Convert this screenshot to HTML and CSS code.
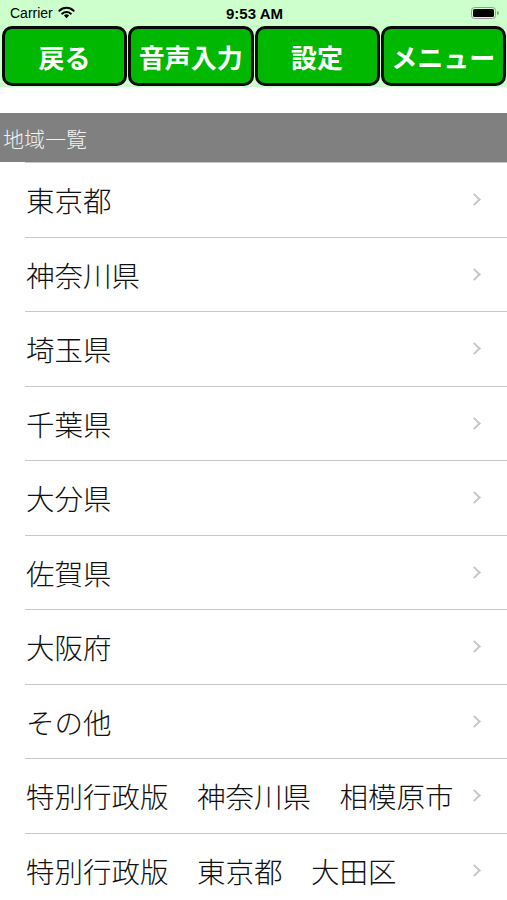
FILE: index.html
```html
<!DOCTYPE html>
<html lang="ja">
<head>
<meta charset="utf-8">
<link rel="stylesheet" href="styles.css">
</head>
<body>
<div class="top">
  <div class="status">
    <div class="st-left">
      <span class="carrier">Carrier</span>
      <svg class="wifi" width="17" height="13" viewBox="0 0 16 12">
        <path d="M8 11.5 L5.6 8.9 A3.4 3.4 0 0 1 10.4 8.9 Z" fill="#000"/>
        <path d="M3.9 7.1 A5.9 5.9 0 0 1 12.1 7.1" fill="none" stroke="#000" stroke-width="1.9" stroke-linecap="round"/>
        <path d="M1.3 4.4 A9.5 9.5 0 0 1 14.7 4.4" fill="none" stroke="#000" stroke-width="1.9" stroke-linecap="round"/>
      </svg>
    </div>
    <div class="time">9:53 AM</div>
    <div class="st-right">
      <svg class="battery" width="28" height="12" viewBox="0 0 28 12">
        <rect x="0.5" y="0.5" width="24" height="11" rx="3" fill="none" stroke="#9a9a9a" stroke-width="1"/>
        <rect x="2" y="2" width="21" height="8" rx="1.5" fill="#000"/>
        <path d="M26 4 a1.5 1.5 0 0 1 0 4 z" fill="#9a9a9a"/>
      </svg>
    </div>
  </div>
  <div class="toolbar">
    <div class="btn">戻る</div>
    <div class="btn">音声入力</div>
    <div class="btn">設定</div>
    <div class="btn">メニュー</div>
  </div>
</div>
<div class="spacer"></div>
<div class="section">地域一覧</div>
<ul class="list">
  <li class="row"><span class="label">東京都</span><span class="chev"></span></li>
  <li class="row"><span class="label">神奈川県</span><span class="chev"></span></li>
  <li class="row"><span class="label">埼玉県</span><span class="chev"></span></li>
  <li class="row"><span class="label">千葉県</span><span class="chev"></span></li>
  <li class="row"><span class="label">大分県</span><span class="chev"></span></li>
  <li class="row"><span class="label">佐賀県</span><span class="chev"></span></li>
  <li class="row"><span class="label">大阪府</span><span class="chev"></span></li>
  <li class="row"><span class="label">その他</span><span class="chev"></span></li>
  <li class="row"><span class="label">特別行政版　神奈川県　相模原市</span><span class="chev"></span></li>
  <li class="row"><span class="label">特別行政版　東京都　大田区</span><span class="chev"></span></li>
</ul>
</body>
</html>
```

FILE: styles.css
```css
* { box-sizing: border-box; }
html, body {
  margin: 0;
  padding: 0;
  background: #ffffff;
  font-family: "Noto Sans CJK JP", "Noto Sans", sans-serif;
  overflow: hidden;
}
.top {
  background: #ccffcc;
  height: 87px;
}
.status {
  height: 26px;
  display: flex;
  align-items: center;
  padding: 0 8px 0 10px;
  font-family: "Liberation Sans", Arial, sans-serif;
  color: #000;
}
.st-left {
  display: flex;
  align-items: center;
  gap: 5px;
  flex: 1;
  font-size: 14px;
}
.wifi { margin-top: -2px; }
.time {
  font-size: 15px;
  font-weight: bold;
  flex: 0 0 auto;
}
.st-right {
  flex: 1;
  display: flex;
  justify-content: flex-end;
}
.toolbar {
  display: flex;
  gap: 1px;
  padding: 0 1px 0 2px;
  height: 60px;
}
.btn {
  flex: 1;
  background: #00b800;
  border: 3px solid #0a0a0a;
  border-radius: 10px;
  color: #ffffff;
  font-weight: bold;
  font-size: 26px;
  display: flex;
  align-items: center;
  justify-content: center;
  white-space: nowrap;
  overflow: hidden;
}
.spacer { height: 26px; }
.section {
  background: #808080;
  color: #f2f2f2;
  height: 49px;
  font-size: 21px;
  font-weight: 300;
  display: flex;
  align-items: center;
  padding-left: 3px;
}
.list {
  list-style: none;
  margin: 0;
  padding: 0 0 0 25px;
}
.row {
  height: 74.5px;
  border-top: 1px solid #c8c7cc;
  display: flex;
  align-items: center;
  padding-right: 26px;
}
.label {
  flex: 1;
  font-size: 28.5px;
  font-weight: 300;
  color: #111;
  padding-left: 1px;
  white-space: nowrap;
}
.chev {
  width: 9px;
  height: 9px;
  border-top: 2px solid #c7c7cc;
  border-right: 2px solid #c7c7cc;
  transform: rotate(45deg);
  margin-right: 2px;
}
```
